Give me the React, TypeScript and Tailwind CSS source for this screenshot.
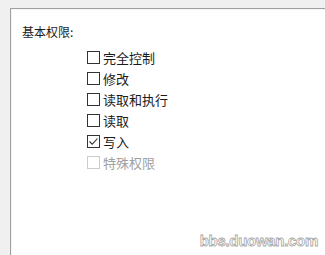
const items = [
  { label: "完全控制", checked: false, disabled: false },
  { label: "修改", checked: false, disabled: false },
  { label: "读取和执行", checked: false, disabled: false },
  { label: "读取", checked: false, disabled: false },
  { label: "写入", checked: true, disabled: false },
  { label: "特殊权限", checked: false, disabled: true },
];

function Box({ checked, disabled }: { checked: boolean; disabled: boolean }) {
  return (
    <span
      className={
        disabled
          ? "w-[13px] h-[13px] border border-[#cccccc] bg-white flex items-center justify-center"
          : "w-[13px] h-[13px] border border-[#333333] bg-white flex items-center justify-center"
      }
    >
      {checked && (
        <svg width="11" height="11" viewBox="0 0 11 11" fill="none">
          <path d="M1.5 5.5 L4.2 8.2 L9.5 2.5" stroke="#333333" strokeWidth="1.1" />
        </svg>
      )}
    </span>
  );
}

export default function App() {
  return (
    <div
      className="relative w-[325px] h-[255px] overflow-hidden bg-[#f0f0f0] pt-[8px] pl-[10px] flex"
      style={{ fontFamily: '"Noto Sans CJK SC", "Noto Sans", sans-serif' }}
    >
      <div className="flex-1 bg-white border-l border-t border-[#a0a0a0] flex">
        <div className="flex-1 border-l border-t border-[#f4f4f4] pl-[10px] pt-[13px]">
          <div className="text-[12px] leading-[17px] text-[#1a1a1a]">基本权限:</div>

          <div className="mt-[7px] ml-[65px] flex flex-col">
            {items.map((it) => (
              <label key={it.label} className="h-[21px] flex items-center gap-[3px]">
                <Box checked={it.checked} disabled={it.disabled} />
                <span
                  className={
                    it.disabled
                      ? "text-[13px] leading-[17px] text-[#a0a0a0]"
                      : "text-[13px] leading-[17px] text-[#1a1a1a]"
                  }
                >
                  {it.label}
                </span>
              </label>
            ))}
          </div>
        </div>
      </div>

      <div
        className="absolute right-[7px] bottom-[5px] text-[15px] leading-[18px] font-bold tracking-[-0.3px] text-white [-webkit-text-stroke:0.8px_#a8a8a8]"
        style={{ fontFamily: '"Liberation Sans", Arial, sans-serif' }}
      >
        bbs.duowan.com
      </div>
    </div>
  );
}
